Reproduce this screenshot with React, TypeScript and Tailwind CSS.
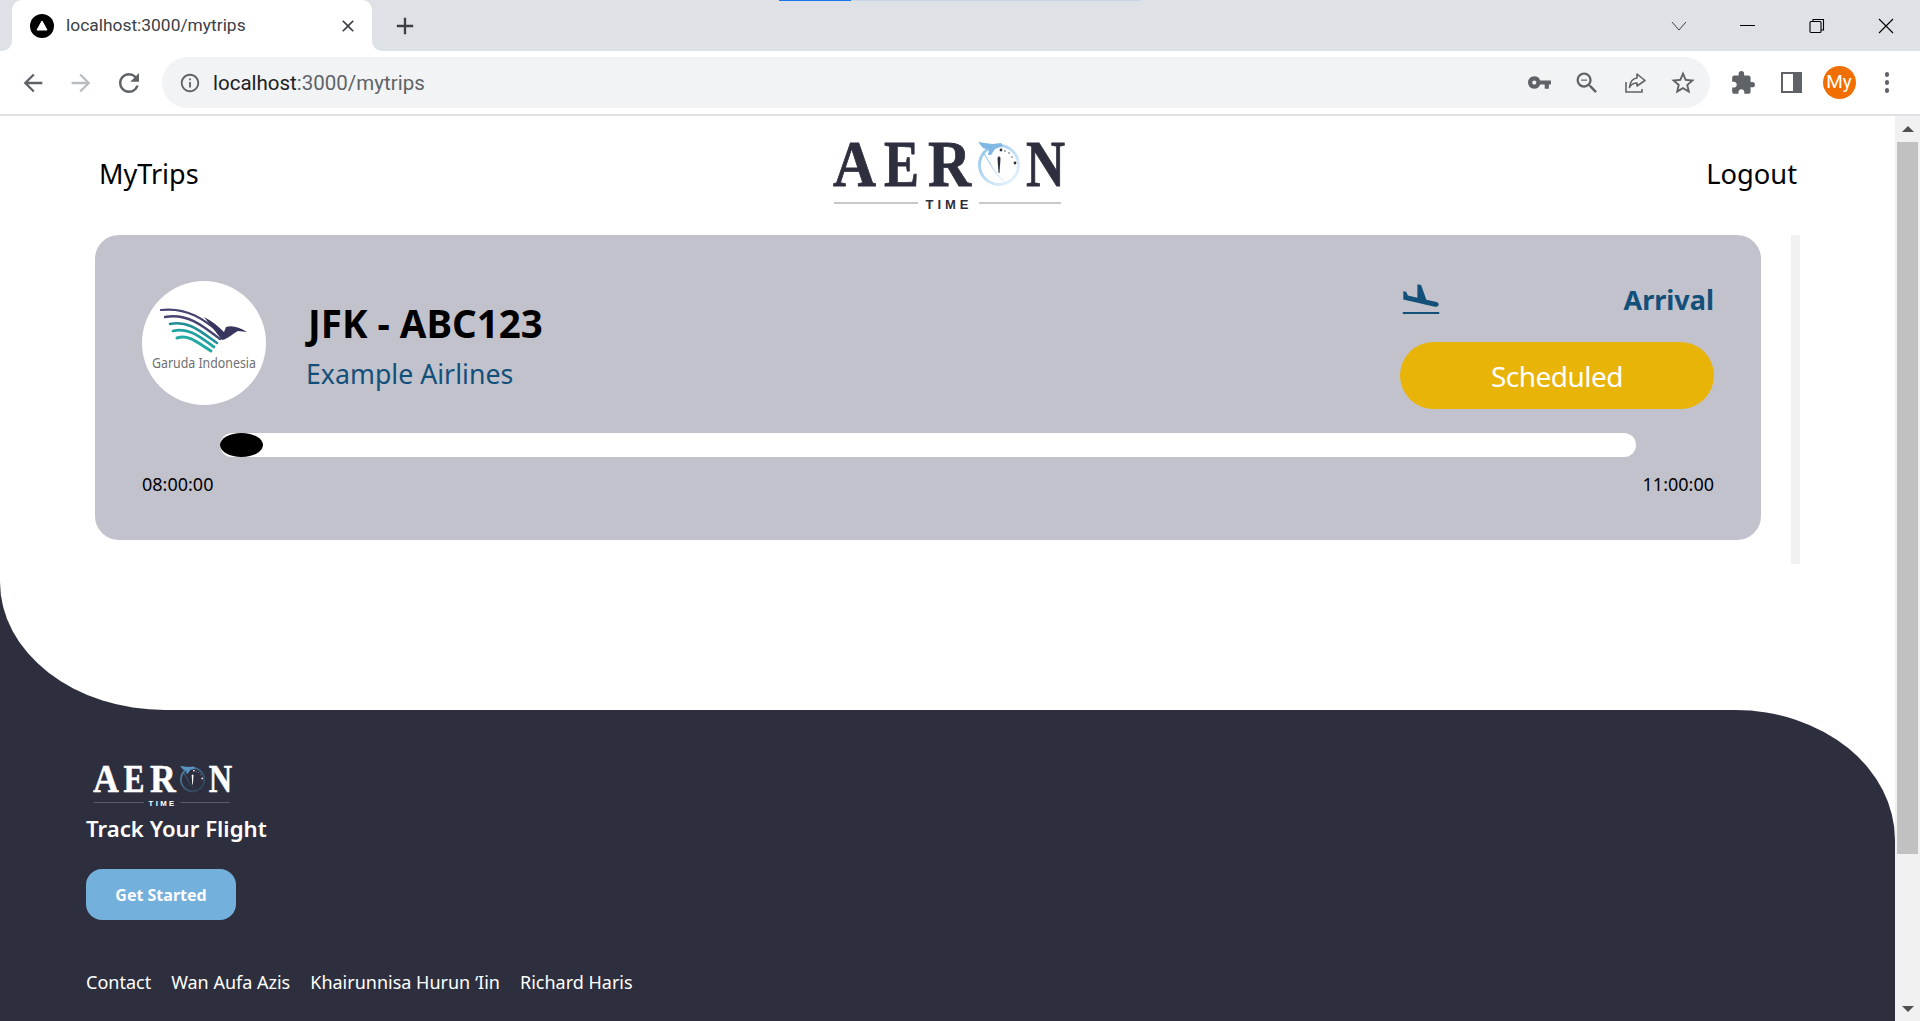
import React from "react";
import {
  MdArrowBack,
  MdArrowForward,
  MdRefresh,
  MdInfoOutline,
  MdVpnKey,
  MdZoomOut,
  MdStarBorder,
  MdExtension,
  MdClose,
  MdAdd,
} from "react-icons/md";

const UI = "font-['Noto_Sans','Open_Sans',sans-serif]";

function Logo({ light, id }: { light?: boolean; id: string }) {
  const ink = light ? "#ffffff" : "#2e2f3e";
  const line = light ? "#77798a" : "#8f909b";
  const ringA = light ? "#4f86ad" : "#8fc4ea";
  const ringB = light ? "#2e3a4e" : "#eef6fc";
  const plane = light ? "#5a96c4" : "#7fb8e4";
  const letter = (t: string, x: number, w: number) => (
    <text
      x={x}
      y={52}
      fill={ink}
      stroke={ink}
      strokeWidth={0.8}
      fontFamily="'Liberation Serif', serif"
      fontWeight={700}
      fontSize={66}
      textLength={w}
      lengthAdjust="spacingAndGlyphs"
    >
      {t}
    </text>
  );
  return (
    <svg viewBox="0 -10 240 90" className="w-full h-full block">
      <defs>
        <linearGradient id={id} x1="0" y1="0" x2="1" y2="1">
          <stop offset="0" stopColor={ringA} />
          <stop offset="1" stopColor={ringB} />
        </linearGradient>
      </defs>
      {letter("A", 0, 43)}
      {letter("E", 51, 35)}
      {letter("R", 95, 43)}
      {letter("N", 193, 39)}
      <circle cx="166" cy="31" r="19.5" fill="none" stroke={`url(#${id})`} strokeWidth="3" />
      <path d="M150 18 C156 26 160 40 172 48" fill="none" stroke={`url(#${id})`} strokeWidth="1.2" />
      <path d="M145 8 L152 9 L160 10 L168 9 L170 12 L162 15 L158 21 L155 21 L156 16 L150 14 Z" fill={plane} />
      <path d="M166 22 L167.5 24 L166.5 39 L165.5 39 L164.5 24 Z" fill={ink} />
      <circle cx="168" cy="16" r="1.4" fill={ink} />
      <circle cx="172" cy="17" r="0.7" fill={ink} />
      <circle cx="176" cy="19" r="0.7" fill={ink} />
      <circle cx="179" cy="23" r="0.7" fill={ink} />
      <circle cx="182" cy="29" r="1.4" fill={ink} />
      <rect x="1" y="68.5" width="84" height="1" fill={line} />
      <rect x="146" y="68.5" width="82" height="1" fill={line} />
      <text
        x="116"
        y="74.5"
        textAnchor="middle"
        fill={ink}
        fontFamily="'Liberation Sans', sans-serif"
        fontWeight={700}
        fontSize={13}
        letterSpacing={4}
      >
        TIME
      </text>
    </svg>
  );
}

function Garuda() {
  return (
    <div className="w-[124px] h-[124px] rounded-full bg-white shrink-0 overflow-hidden">
      <svg viewBox="0 0 124 124" className="w-[124px] h-[124px] block">
        <g fill="none" strokeLinecap="round">
          <path d="M19 29 C45 26 62 38 82 55" stroke="#45436f" strokeWidth="2.2" />
          <path d="M23 36 C45 32 60 44 78 58" stroke="#45436f" strokeWidth="2.4" />
          <path d="M28 43 C46 39 58 50 75 62" stroke="#1d8f95" strokeWidth="2.6" />
          <path d="M31 50 C47 46 58 56 72 66" stroke="#1fa3a0" strokeWidth="2.8" />
          <path d="M35 57 C47 53 56 62 69 70" stroke="#23aaa4" strokeWidth="3" />
        </g>
        <path d="M62 36 C70 40 76 45 82 51 L84 46 C90 44 97 46 105 51 L96 50 C90 53 86 58 80 59 Z" fill="#38365f" />
        <text
          x="62"
          y="87"
          textAnchor="middle"
          fill="#6f7073"
          fontFamily="'Noto Sans', sans-serif"
          fontSize="13.5"
          textLength="104"
          lengthAdjust="spacingAndGlyphs"
        >
          Garuda Indonesia
        </text>
      </svg>
    </div>
  );
}

function Slot({ children, w = "w-[48px]" }: { children: React.ReactNode; w?: string }) {
  return <div className={`${w} h-full flex items-center justify-center shrink-0`}>{children}</div>;
}

function ShareIcon() {
  return (
    <svg width="24" height="24" viewBox="0 0 24 24" fill="none" stroke="#5f6368" strokeWidth="1.6">
      <path d="M3 11 V21 H19 V18" />
      <path d="M14 3 L22 9.5 L14 15 V12 C10.5 12 8 13.5 6.5 16.5 C7 11 9.5 7.5 14 7 Z" strokeLinejoin="round" />
    </svg>
  );
}

function FlightLand() {
  return (
    <svg width="46" height="39" viewBox="0 0 24 24" preserveAspectRatio="none" fill="#12507a" className="-ml-[2px]">
      <path d="M2.5 19h19v1.3h-19zm7.18-5.73l4.35 1.16 5.31 1.42c.8.21 1.62-.26 1.84-1.06.21-.8-.26-1.62-1.06-1.84l-5.31-1.42-2.76-9.02L10.12 2v8.28L5.15 8.95l-.93-2.32-1.45-.39v5.17l1.6.43 5.31 1.43z" />
    </svg>
  );
}

function TabStrip() {
  return (
    <div className="h-[51px] bg-[#dee1e6] flex relative shrink-0">
      <div className="absolute top-0 left-[779px] w-[72px] h-[1px] bg-[#1a73e8]" />
      <div className="absolute top-0 left-[851px] w-[290px] h-[1px] bg-[#c8d3e6]" />
      <div className="relative ml-[12px] w-[360px] h-[51px] bg-white rounded-t-[10px] flex items-center pl-[18px] pr-[14px]">
        <div className="absolute -left-[10px] bottom-0 w-[10px] h-[10px] bg-white">
          <div className="w-full h-full bg-[#dee1e6] rounded-br-[10px]" />
        </div>
        <div className="absolute -right-[10px] bottom-0 w-[10px] h-[10px] bg-white">
          <div className="w-full h-full bg-[#dee1e6] rounded-bl-[10px]" />
        </div>
        <div className="w-[24px] h-[24px] rounded-full bg-black flex items-center justify-center shrink-0">
          <svg width="12" height="11" viewBox="0 0 12 11">
            <path d="M6 1 L11 10 H1 Z" fill="#fff" stroke="#fff" strokeLinejoin="round" />
          </svg>
        </div>
        <span className="ml-[12px] text-[17.4px] text-[#3c4043] font-['Roboto',sans-serif] flex-1 whitespace-nowrap">
          localhost:3000/mytrips
        </span>
        <MdClose size={20} color="#3c4043" />
      </div>
      <div className="ml-[19px] flex items-center">
        <MdAdd size={28} color="#3c4043" />
      </div>
      <div className="ml-auto flex h-[51px] items-center">
        <Slot w="w-[69px]">
          <svg width="16" height="10" viewBox="0 0 16 10" fill="none" stroke="#3c4043" strokeWidth="1">
            <path d="M1 1 L8 9 L15 1" />
          </svg>
        </Slot>
        <Slot w="w-[69px]">
          <div className="w-[15px] h-[1.5px] bg-black" />
        </Slot>
        <Slot w="w-[69px]">
          <svg width="16" height="16" viewBox="0 0 16 16" fill="none" stroke="#000" strokeWidth="1.1">
            <rect x="1" y="3.5" width="11" height="11" rx="1" />
            <path d="M4 3.5 V1.5 H14.5 V12 H12" />
          </svg>
        </Slot>
        <Slot w="w-[69px]">
          <svg width="16" height="16" viewBox="0 0 16 16" fill="none" stroke="#000" strokeWidth="1.1">
            <path d="M1 1 L15 15 M15 1 L1 15" />
          </svg>
        </Slot>
      </div>
    </div>
  );
}

function Toolbar() {
  return (
    <div className="h-[65px] bg-white border-b-2 border-[#dfe0e1] flex items-start pt-[6px] pl-[9px] shrink-0">
      <div className="flex h-[51px] items-center">
        <Slot>
          <MdArrowBack size={28} color="#5f6368" />
        </Slot>
        <Slot>
          <MdArrowForward size={28} color="#b9bcc0" />
        </Slot>
        <Slot>
          <MdRefresh size={30} color="#5f6368" />
        </Slot>
      </div>
      <div className="ml-[9px] w-[1548px] h-[51px] rounded-full bg-[#f1f3f4] flex items-center pl-[17px] pr-[3px]">
        <MdInfoOutline size={22} color="#5f6368" className="shrink-0" />
        <span className="ml-[12px] mt-[1px] text-[20.5px] font-['Roboto',sans-serif] text-[#202124] whitespace-nowrap">
          localhost<span className="text-[#5f6368]">:3000/mytrips</span>
        </span>
        <div className="ml-auto flex h-full items-center">
          <Slot>
            <MdVpnKey size={25} color="#5f6368" />
          </Slot>
          <Slot>
            <MdZoomOut size={28} color="#5f6368" />
          </Slot>
          <Slot>
            <ShareIcon />
          </Slot>
          <Slot>
            <MdStarBorder size={28} color="#5f6368" />
          </Slot>
        </div>
      </div>
      <div className="ml-[9px] flex h-[51px] items-center">
        <Slot>
          <MdExtension size={26} color="#5f6368" />
        </Slot>
        <Slot>
          <div className="w-[21px] h-[21px] border-[2px] border-[#5f6368] flex justify-end">
            <div className="w-[7px] h-full bg-[#5f6368]" />
          </div>
        </Slot>
        <Slot>
          <div className="w-[33px] h-[33px] rounded-full bg-[#f06f00] flex items-center justify-center text-white text-[19px] font-['Roboto',sans-serif]">
            My
          </div>
        </Slot>
        <Slot>
          <div className="flex flex-col gap-[3.5px]">
            <div className="w-[4.5px] h-[4.5px] rounded-full bg-[#5f6368]" />
            <div className="w-[4.5px] h-[4.5px] rounded-full bg-[#5f6368]" />
            <div className="w-[4.5px] h-[4.5px] rounded-full bg-[#5f6368]" />
          </div>
        </Slot>
      </div>
    </div>
  );
}

function Card() {
  return (
    <div className="w-[1666px] h-[305px] bg-[#c2c2cc] rounded-[24px] pt-[46px] px-[47px]">
      <div className="flex h-[128px]">
        <Garuda />
        <div className="ml-[40px] flex flex-col pt-[17px]">
          <div className="ml-[2px] text-[38.5px] leading-[50px] font-bold text-black whitespace-nowrap">JFK - ABC123</div>
          <div className="text-[26.7px] leading-[38px] mt-[7px] text-[#12507a] whitespace-nowrap">Example Airlines</div>
        </div>
        <div className="ml-auto w-[314px] flex flex-col">
          <div className="h-[61px] pb-[22px] flex items-center justify-between">
            <FlightLand />
            <span className="text-[27px] font-bold text-[#12507a]">Arrival</span>
          </div>
          <div className="h-[67px] rounded-full bg-[#e9b408] flex items-center justify-center text-white text-[28px] tracking-[-0.5px]">
            Scheduled
          </div>
        </div>
      </div>
      <div className="mt-[24px] mx-[78px] h-[24px] bg-white rounded-full">
        <div className="w-[43px] h-[24px] rounded-[50%] bg-black" />
      </div>
      <div className="mt-[14px] flex justify-between text-[18px] leading-[26px] text-black">
        <span>08:00:00</span>
        <span>11:00:00</span>
      </div>
    </div>
  );
}

export default function App() {
  return (
    <div className={`w-[1920px] h-[1021px] overflow-hidden flex flex-col bg-white ${UI}`}>
      <TabStrip />
      <Toolbar />
      <div className="flex flex-1 min-h-0">
        <div className="w-[1895px] flex flex-col">
          <div className="h-[594px] bg-[#2e2f3e] shrink-0">
            <div className="h-full bg-white rounded-bl-[165px_128px]">
              <div className="h-[119px] pl-[99px] pr-[98px] flex items-center justify-between">
                <span className="text-[27px] mb-[2px] text-black">MyTrips</span>
                <div className="w-[240px] h-[90px] mb-[13px] ml-[2px]">
                  <Logo id="logoDark" />
                </div>
                <span className="text-[27.3px] mb-[2px] text-black">Logout</span>
              </div>
              <div className="ml-[95px] flex items-start">
                <Card />
                <div className="ml-[30px] w-[9px] h-[329px] bg-[#f1f1f1]" />
              </div>
            </div>
          </div>
          <div className="flex-1 bg-white">
            <div className="h-full bg-[#2e2f3e] rounded-tr-[160px_130px] pl-[86px] pt-[45px] flex flex-col items-start text-white">
              <div className="ml-[7px] w-[144px] h-[54px]">
                <Logo light id="logoLight" />
              </div>
              <div className="mt-[4px] text-[22.2px] leading-[32px] font-semibold whitespace-nowrap">Track Your Flight</div>
              <div className="mt-[24px] w-[150px] h-[51px] rounded-[16px] bg-[#74b0dc] flex items-center justify-center text-[16px] font-bold">
                Get Started
              </div>
              <div className="mt-[46px] flex gap-[20px] text-[18px] leading-[32px] whitespace-nowrap">
                <span>Contact</span>
                <span>Wan Aufa Azis</span>
                <span>Khairunnisa Hurun ‘Iin</span>
                <span>Richard Haris</span>
              </div>
            </div>
          </div>
        </div>
        <div className="w-[25px] bg-[#f1f1f1] flex flex-col items-center relative">
          <div className="h-[26px] flex items-center justify-center shrink-0">
            <div className="w-0 h-0 border-x-[6px] border-x-transparent border-b-[6px] border-b-[#505050]" />
          </div>
          <div className="w-[21px] h-[712px] bg-[#c1c1c1]" />
          <div className="mt-auto h-[24px] flex items-center justify-center">
            <div className="w-0 h-0 border-x-[6px] border-x-transparent border-t-[6px] border-t-[#505050]" />
          </div>
        </div>
      </div>
    </div>
  );
}
